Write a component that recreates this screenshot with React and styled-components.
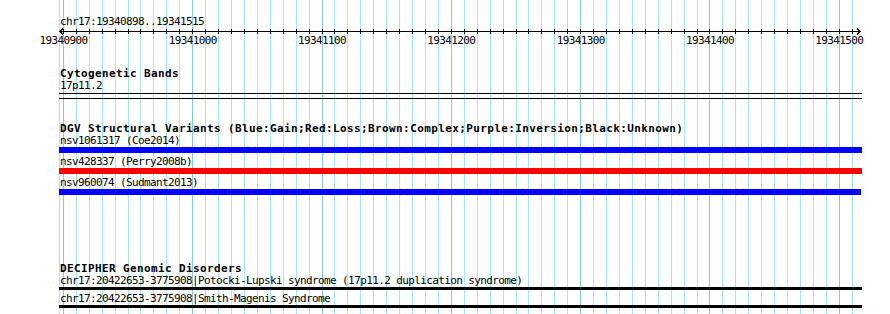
import React from 'react';
import styled, { createGlobalStyle } from 'styled-components';

const GlobalStyle = createGlobalStyle`
    html, body {
        margin:0;
        padding:0;
        background:#fff;
    }
`;

const VIEW_W = 890;
const VIEW_H = 314;
const px = bp => 63.4 + (bp - 19340900) * 1.2932;

const ticks = [];
for (let bp = 19340900; bp <= 19341510; bp += 10) ticks.push(bp);

const Page = styled.div`
    position: relative;
    width:${VIEW_W}px;
    height:${VIEW_H}px;
    overflow: hidden;
    background:#fff;
    font-family: "DejaVu Sans Mono", "Liberation Mono", monospace;
    color:#000;
`;

const GridLayer = styled.svg`
    position: absolute;
    left:0;
    top:0;
    z-index:0;
`;

const Panel = styled.div`
    position: relative;
    z-index:1;
    display:flex;
    flex-direction: column;
`;

const PositionLabel = styled.div`
    margin-top:15px;
    margin-left:60px;
    font-size:11px;
    letter-spacing:-0.62px;
    line-height:13px;
    height:13px;
    white-space: nowrap;
`;

const Axis = styled.svg`
    display:block;
    font-family: "DejaVu Sans Mono", "Liberation Mono", monospace;
    font-size:11px;
    letter-spacing:-0.62px;
`;

const Track = styled.div`
    display:flex;
    flex-direction: column;
    margin-left:59px;
    width:803px;
    margin-top:${props => props.$gap}px;
`;

const TrackTitle = styled.div`
    padding-left:1px;
    font-size:11px;
    font-weight:bold;
    letter-spacing:0.38px;
    line-height:13px;
    height:13px;
    white-space: nowrap;
`;

const FeatureRow = styled.div`
    display:flex;
    flex-direction: column;
    margin-bottom:${props => props.$after}px;
`;

const FeatureLabel = styled.div`
    padding-left:1px;
    font-size:11px;
    letter-spacing:-0.62px;
    line-height:12px;
    height:12px;
    white-space: nowrap;
`;

const FeatureBar = styled.div`
    height:${props => props.$h}px;
    margin-top:${props => props.$top || 0}px;
    background:${props => props.$color};
`;

const BandBox = styled.div`
    margin-top:1px;
    height:4px;
    border-top:1px solid #000;
    border-bottom:1px solid #000;
`;

function Grid() {
    return (
        <GridLayer width={VIEW_W} height={VIEW_H} shapeRendering="crispEdges">
            <line x1={59.5} x2={59.5} y1={0} y2={VIEW_H} stroke="#a6e6ee" />
            {ticks.map(bp => {
                const x = Math.floor(px(bp)) + 0.5;
                const major = bp % 100 === 0;
                return (
                    <line key={bp} x1={x} x2={x} y1={0} y2={VIEW_H}
                        stroke={major ? '#86c6e6' : '#a6e6ee'} />
                );
            })}
        </GridLayer>
    );
}

function Ruler() {
    const y = 3.5;
    return (
        <Axis width={VIEW_W} height={20} shapeRendering="crispEdges">
            <line x1={59} x2={861} y1={y} y2={y} stroke="#000" />
            <polyline points={`63,${y - 3} 60,${y} 63,${y + 3}`} fill="none" stroke="#000" />
            <polyline points={`857,${y - 3} 860,${y} 857,${y + 3}`} fill="none" stroke="#000" />
            {ticks.map(bp => {
                const x = Math.floor(px(bp)) + 0.5;
                return <line key={bp} x1={x} x2={x} y1={1} y2={6} stroke="#000" />;
            })}
            {ticks.filter(bp => bp % 100 === 0).map(bp => (
                <text key={bp} x={px(bp)} y={16} textAnchor="middle" fill="#000">{bp}</text>
            ))}
        </Axis>
    );
}

const dgv = [
    { name: 'nsv1061317 (Coe2014)', color: '#0000ff' },
    { name: 'nsv428337 (Perry2008b)', color: '#ff0000' },
    { name: 'nsv960074 (Sudmant2013)', color: '#0000ff', width: 802 },
];

const decipher = [
    'chr17:20422653-3775908|Potocki-Lupski syndrome (17p11.2 duplication syndrome)',
    'chr17:20422653-3775908|Smith-Magenis Syndrome',
];

function App() {
    return (
        <Page>
            <GlobalStyle />
            <Grid />
            <Panel>
                <PositionLabel>chr17:19340898..19341515</PositionLabel>
                <Ruler />

                <Track $gap={19}>
                    <TrackTitle>Cytogenetic Bands</TrackTitle>
                    <FeatureLabel>17p11.2</FeatureLabel>
                    <BandBox />
                </Track>

                <Track $gap={23}>
                    <TrackTitle>DGV Structural Variants (Blue:Gain;Red:Loss;Brown:Complex;Purple:Inversion;Black:Unknown)</TrackTitle>
                    {dgv.map(f => (
                        <FeatureRow key={f.name} $after={3}>
                            <FeatureLabel>{f.name}</FeatureLabel>
                            <FeatureBar $h={6} $color={f.color} style={f.width ? { width: f.width } : null} />
                        </FeatureRow>
                    ))}
                </Track>

                <Track $gap={64}>
                    <TrackTitle>DECIPHER Genomic Disorders</TrackTitle>
                    {decipher.map(name => (
                        <FeatureRow key={name} $after={3}>
                            <FeatureLabel>{name}</FeatureLabel>
                            <FeatureBar $h={3} $color="#000" />
                        </FeatureRow>
                    ))}
                </Track>
            </Panel>
        </Page>
    );
}

export default App;
